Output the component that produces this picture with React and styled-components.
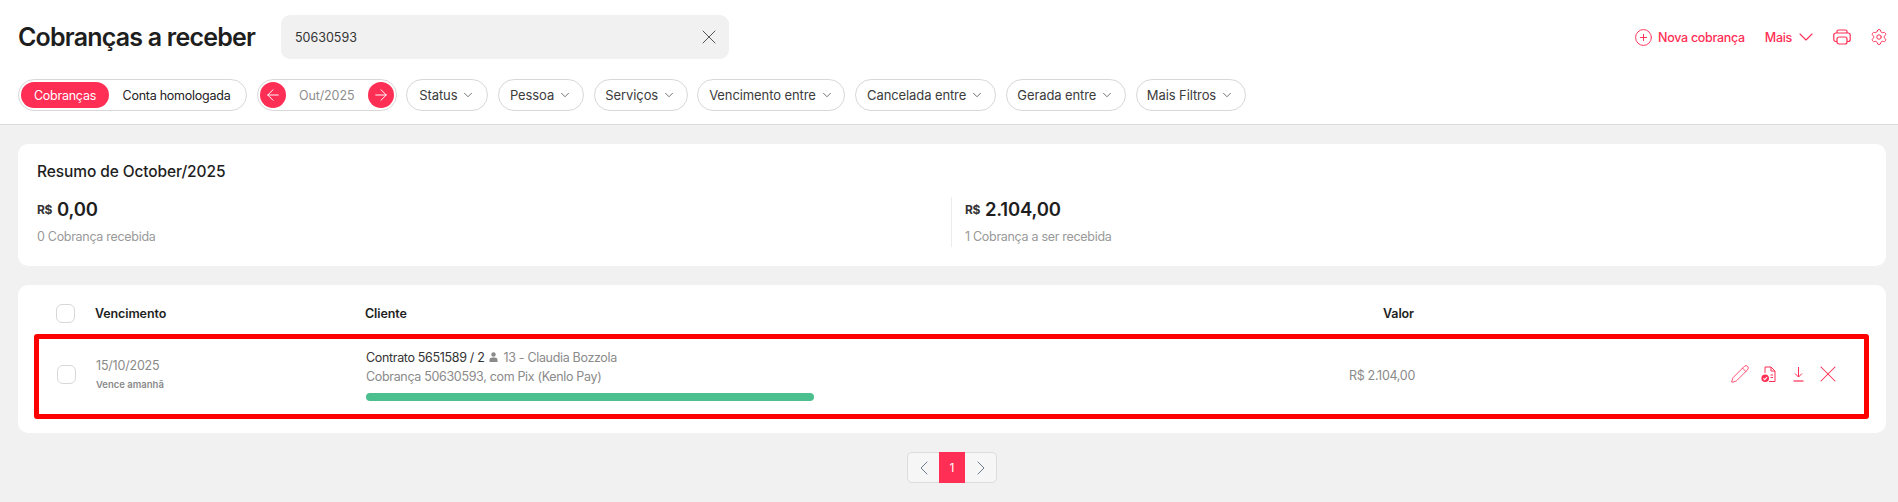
import React from "react";
import styled, { createGlobalStyle } from "styled-components";
import {
  ArrowLeft,
  ArrowRight,
  ChevronDown,
  ChevronLeft,
  ChevronRight,
  CirclePlus,
  Pencil,
  Settings,
  X,
} from "lucide-react";

const PINK = "#ff2e55";

const GlobalStyle = createGlobalStyle`
  html, body {
    margin: 0;
    background: #f1f1f1;
    overflow: hidden;
  }
  * { box-sizing: border-box; }
  body {
    font-family: Inter, "Open Sans", "Liberation Sans", sans-serif;
    color: #1e1e1e;
  }
`;

const Page = styled.div`
  width: 1898px;
  height: 502px;
`;

// Header
const Header = styled.header`
  height: 125px;
  background: #fff;
  border-bottom: 1px solid #dcdcdc;
  padding: 15px 12px 0 18px;
`;
const TopRow = styled.div`
  display: flex;
  align-items: center;
  height: 44px;
`;
const Title = styled.h1`
  margin: 0;
  width: 263px;
  font-size: 25px;
  font-weight: 600;
  letter-spacing: -0.8px;
  color: #1e1e1e;
`;
const Search = styled.div`
  width: 448px;
  height: 44px;
  background: #f1f1f1;
  border-radius: 9px;
  padding: 0 8px 0 14px;
  display: flex;
  align-items: center;
  justify-content: space-between;
  font-size: 12.5px;
  color: #333;
  svg { color: #555; }
`;
const TopActions = styled.div`
  margin-left: auto;
  display: flex;
  align-items: center;
  color: ${PINK};
  font-size: 12.5px;
  font-weight: 500;
`;
const ActionLink = styled.span`
  display: flex;
  align-items: center;
  gap: ${(p) => p.$gap ?? 5}px;
  margin-right: ${(p) => p.$mr || 0}px;
  letter-spacing: -0.3px;
`;
const FilterRow = styled.div`
  display: flex;
  align-items: center;
  gap: 9.7px;
  margin-top: 20px;
`;
const Pill = styled.div`
  height: 32px;
  border: 1px solid #d8d8d8;
  border-radius: 16px;
  display: flex;
  align-items: center;
  background: #fff;
  font-size: 12.5px;
  letter-spacing: -0.25px;
  color: #3c3c3c;
`;
const Toggle = styled(Pill)`
  width: 229px;
  padding: 0 2px;
`;
const ToggleOption = styled.span`
  height: 26px;
  width: ${(p) => (p.$active ? "88px" : "auto")};
  flex: ${(p) => (p.$active ? "none" : 1)};
  display: flex;
  align-items: center;
  justify-content: center;
  border-radius: 13px;
  background: ${(p) => (p.$active ? PINK : "transparent")};
  color: ${(p) => (p.$active ? "#fff" : "#222")};
`;
const MonthPill = styled(Pill)`
  width: 140px;
  padding: 0 2px;
  justify-content: space-between;
  color: #8e8e8e;
  letter-spacing: -0.1px;
`;
const RoundBtn = styled.span`
  width: 26px;
  height: 26px;
  border-radius: 50%;
  background: ${PINK};
  color: #fff;
  display: flex;
  align-items: center;
  justify-content: center;
`;
const FilterPill = styled(Pill)`
  width: ${(p) => p.$w}px;
  justify-content: center;
  gap: 4px;
  font-size: 13px;
  letter-spacing: -0.1px;
  svg { color: #555; }
`;

// Cards
const Content = styled.main`
  padding: 19px 12px 0 18px;
`;
const Card = styled.section`
  background: #fff;
  border-radius: 10px;
`;
const SummaryCard = styled(Card)`
  height: 122px;
  padding: 18px 19px 0;
`;
const SummaryTitle = styled.h2`
  margin: 0;
  font-size: 15.5px;
  line-height: 20px;
  font-weight: 500;
  letter-spacing: -0.1px;
`;
const SummaryGrid = styled.div`
  display: grid;
  grid-template-columns: 914px 1fr;
  margin-top: 15px;
`;
const SummaryItem = styled.div`
  height: 50px;
  ${(p) => p.$divided && `
    border-left: 1px solid #ececec;
    padding-left: 13px;
  `}
`;
const Amount = styled.div`
  display: flex;
  align-items: center;
  gap: 5px;
  height: 24px;
  font-size: 18.5px;
  font-weight: 600;
  letter-spacing: -0.2px;
`;
const Currency = styled.span`
  font-size: 12px;
  font-weight: 700;
  color: #333;
  letter-spacing: -0.4px;
`;
const SummaryNote = styled.div`
  margin-top: 8px;
  font-size: 12.5px;
  line-height: 16px;
  letter-spacing: -0.3px;
  color: #999;
`;
const TableCard = styled(Card)`
  height: 148px;
  margin-top: 19px;
  padding: 0 17px 0 16px;
`;
const columns = "39px 270px 749px 300px 1fr";
const HeadRow = styled.div`
  display: grid;
  grid-template-columns: ${columns};
  align-items: center;
  height: 49px;
  padding: 7px 0 0 22px;
  font-size: 12.5px;
  font-weight: 600;
  letter-spacing: -0.1px;
`;
const Row = styled.div`
  display: grid;
  grid-template-columns: ${columns};
  align-items: center;
  height: 85px;
  border: 5px solid #ff0000;
  border-radius: 3px;
  padding: 0 0 5px 18px;
`;
const Check = styled.span`
  display: block;
  width: 19px;
  height: 19px;
  border: 1px solid #d8d8d8;
  border-radius: 6px;
  background: #fff;
`;
const RightCell = styled.div`
  text-align: right;
`;
const DateText = styled.div`
  font-size: 12.5px;
  letter-spacing: -0.2px;
  color: #8a8a8a;
  line-height: 16px;
`;
const DueText = styled.div`
  margin-top: 5px;
  font-size: 9.5px;
  font-weight: 600;
  color: #8a8a8a;
  line-height: 12px;
`;
const ClientLine = styled.div`
  display: flex;
  align-items: center;
  gap: 5px;
  font-size: 12.5px;
  line-height: 19px;
  letter-spacing: -0.33px;
  color: #333;
`;
const Muted = styled.span`
  color: #8a8a8a;
`;
const ProgressBar = styled.div`
  width: 448px;
  height: 8px;
  margin-top: 7px;
  border-radius: 4px;
  background: #4bbf8d;
`;
const ValueText = styled.span`
  font-size: 12.5px;
  letter-spacing: -0.3px;
  color: #8a8a8a;
`;
const RowActions = styled.div`
  display: flex;
  align-items: center;
  justify-content: flex-end;
  padding-right: 22px;
  color: ${PINK};
`;
const RowAction = styled.span`
  display: flex;
  margin-left: ${(p) => p.$ml || 0}px;
`;

// Pagination
const Pager = styled.nav`
  display: flex;
  justify-content: center;
  margin-top: 19px;
`;
const PagerBox = styled.div`
  display: flex;
  height: 31px;
  border: 1px solid #dcdcdc;
  border-radius: 5px;
  background: #f6f6f6;
`;
const PagerBtn = styled.span`
  width: ${(p) => (p.$active ? 26 : 31)}px;
  margin: ${(p) => (p.$active ? "-1px 0" : 0)};
  display: flex;
  align-items: center;
  justify-content: center;
  font-size: 12px;
  background: ${(p) => (p.$active ? PINK : "transparent")};
  color: ${(p) => (p.$active ? "#fff" : "#6b7a8c")};
`;

const PrinterIcon = () => (
  <svg width="18" height="16" viewBox="0 0 18 16" fill="none" stroke="currentColor" strokeWidth="1.2">
    <path d="M4 4V2.5A1.5 1.5 0 0 1 5.5 1h7A1.5 1.5 0 0 1 14 2.5V4" />
    <path d="M4 12.5H2.8A2 2 0 0 1 .8 10.5V6a2 2 0 0 1 2-2h12.4a2 2 0 0 1 2 2v4.5a2 2 0 0 1-2 2H14" />
    <rect x="4" y="8" width="10" height="7" rx="2" />
  </svg>
);

const PersonIcon = () => (
  <svg width="9" height="10" viewBox="0 0 9 10" fill="#8a8a8a">
    <circle cx="4.5" cy="2.5" r="2.2" />
    <path d="M.5 10V8a3 2.6 0 0 1 3-2.4h2a3 2.6 0 0 1 3 2.4v2z" />
  </svg>
);

const DocCheckIcon = () => (
  <svg width="15" height="17" viewBox="0 0 15 17" fill="none" stroke={PINK} strokeWidth="1">
    <path d="M4 7V1h6l4 4v10.5h-6" />
    <path d="M10 1v4h4" />
    <path d="M9.5 9h2.5M9.5 11.5h2.5" />
    <circle cx="4.2" cy="12.3" r="3.8" fill={PINK} stroke="none" />
    <path d="M2.4 12.4l1.3 1.3 2.4-2.6" stroke="#fff" strokeWidth="1.1" />
  </svg>
);

const DownloadIcon = () => (
  <svg width="11" height="16" viewBox="0 0 11 16" fill="none" stroke={PINK} strokeWidth="1">
    <path d="M5.5 1v10M2 7.5L5.5 11 9 7.5" />
    <path d="M.5 15h10" strokeWidth="1.2" />
  </svg>
);

const filters = [
  ["Status", 82],
  ["Pessoa", 86],
  ["Serviços", 94],
  ["Vencimento entre", 148],
  ["Cancelada entre", 141],
  ["Gerada entre", 120],
  ["Mais Filtros", 110],
];

export default function App() {
  return (
    <Page>
      <GlobalStyle />
      <Header>
        <TopRow>
          <Title>Cobranças a receber</Title>
          <Search>
            <span>50630593</span>
            <X size={24} strokeWidth={1} />
          </Search>
          <TopActions>
            <ActionLink $mr={20}>
              <CirclePlus size={19} strokeWidth={1.2} />
              Nova cobrança
            </ActionLink>
            <ActionLink $mr={15} $gap={2}>
              Mais
              <ChevronDown size={24} strokeWidth={1.1} />
            </ActionLink>
            <ActionLink $mr={19}>
              <PrinterIcon />
            </ActionLink>
            <ActionLink $mr={-2}>
              <Settings size={18} strokeWidth={1.3} />
            </ActionLink>
          </TopActions>
        </TopRow>
        <FilterRow>
          <Toggle>
            <ToggleOption $active>Cobranças</ToggleOption>
            <ToggleOption>Conta homologada</ToggleOption>
          </Toggle>
          <MonthPill>
            <RoundBtn>
              <ArrowLeft size={18} strokeWidth={1.3} />
            </RoundBtn>
            Out/2025
            <RoundBtn>
              <ArrowRight size={18} strokeWidth={1.3} />
            </RoundBtn>
          </MonthPill>
          {filters.map(([label, width]) => (
            <FilterPill key={label} $w={width}>
              {label}
              <ChevronDown size={14} strokeWidth={1.4} />
            </FilterPill>
          ))}
        </FilterRow>
      </Header>

      <Content>
        <SummaryCard>
          <SummaryTitle>Resumo de October/2025</SummaryTitle>
          <SummaryGrid>
            <SummaryItem>
              <Amount>
                <Currency>R$</Currency>
                0,00
              </Amount>
              <SummaryNote>0 Cobrança recebida</SummaryNote>
            </SummaryItem>
            <SummaryItem $divided>
              <Amount>
                <Currency>R$</Currency>
                2.104,00
              </Amount>
              <SummaryNote>1 Cobrança a ser recebida</SummaryNote>
            </SummaryItem>
          </SummaryGrid>
        </SummaryCard>

        <TableCard>
          <HeadRow>
            <Check />
            <span>Vencimento</span>
            <span>Cliente</span>
            <RightCell>Valor</RightCell>
          </HeadRow>
          <Row>
            <Check />
            <div>
              <DateText>15/10/2025</DateText>
              <DueText>Vence amanhã</DueText>
            </div>
            <div>
              <ClientLine>
                Contrato 5651589 / 2
                <PersonIcon />
                <Muted>13 - Claudia Bozzola</Muted>
              </ClientLine>
              <ClientLine>
                <Muted>Cobrança 50630593, com Pix (Kenlo Pay)</Muted>
              </ClientLine>
              <ProgressBar />
            </div>
            <RightCell>
              <ValueText>R$ 2.104,00</ValueText>
            </RightCell>
            <RowActions>
              <RowAction>
                <Pencil size={20} strokeWidth={1} />
              </RowAction>
              <RowAction $ml={11}>
                <DocCheckIcon />
              </RowAction>
              <RowAction $ml={17}>
                <DownloadIcon />
              </RowAction>
              <RowAction $ml={10}>
                <X size={28} strokeWidth={0.9} />
              </RowAction>
            </RowActions>
          </Row>
        </TableCard>

        <Pager>
          <PagerBox>
            <PagerBtn>
              <ChevronLeft size={24} strokeWidth={1} />
            </PagerBtn>
            <PagerBtn $active>1</PagerBtn>
            <PagerBtn>
              <ChevronRight size={24} strokeWidth={1} />
            </PagerBtn>
          </PagerBox>
        </Pager>
      </Content>
    </Page>
  );
}
